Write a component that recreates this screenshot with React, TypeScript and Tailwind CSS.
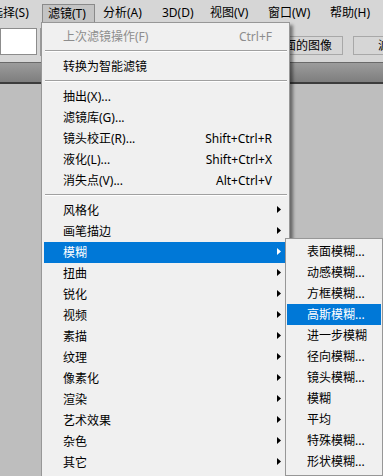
type Row =
  | { kind: "sep" }
  | { kind: "item"; label: string; shortcut?: string; sub?: boolean; disabled?: boolean; active?: boolean };

const mainRows: Row[] = [
  { kind: "item", label: "上次滤镜操作(F)", shortcut: "Ctrl+F", disabled: true },
  { kind: "sep" },
  { kind: "item", label: "转换为智能滤镜" },
  { kind: "sep" },
  { kind: "item", label: "抽出(X)..." },
  { kind: "item", label: "滤镜库(G)..." },
  { kind: "item", label: "镜头校正(R)...", shortcut: "Shift+Ctrl+R" },
  { kind: "item", label: "液化(L)...", shortcut: "Shift+Ctrl+X" },
  { kind: "item", label: "消失点(V)...", shortcut: "Alt+Ctrl+V" },
  { kind: "sep" },
  { kind: "item", label: "风格化", sub: true },
  { kind: "item", label: "画笔描边", sub: true },
  { kind: "item", label: "模糊", sub: true, active: true },
  { kind: "item", label: "扭曲", sub: true },
  { kind: "item", label: "锐化", sub: true },
  { kind: "item", label: "视频", sub: true },
  { kind: "item", label: "素描", sub: true },
  { kind: "item", label: "纹理", sub: true },
  { kind: "item", label: "像素化", sub: true },
  { kind: "item", label: "渲染", sub: true },
  { kind: "item", label: "艺术效果", sub: true },
  { kind: "item", label: "杂色", sub: true },
  { kind: "item", label: "其它", sub: true },
  { kind: "sep" },
];

const blurItems = [
  "表面模糊...",
  "动感模糊...",
  "方框模糊...",
  "高斯模糊...",
  "进一步模糊",
  "径向模糊...",
  "镜头模糊...",
  "模糊",
  "平均",
  "特殊模糊...",
  "形状模糊...",
];

// label + width of each menu bar slot
const menuBar: [string, string][] = [
  ["选择(S)", "w-[56px]"],
  ["滤镜(T)", "w-[56px]"],
  ["分析(A)", "w-[59px]"],
  ["3D(D)", "w-[48px]"],
  ["视图(V)", "w-[58px]"],
  ["窗口(W)", "w-[62px]"],
  ["帮助(H)", "w-[58px]"],
];

function Arrow({ white }: { white?: boolean }) {
  return (
    <svg width="4" height="7" viewBox="0 0 4 7" className="-mt-[3px]">
      <path d="M0 0L4 3.5L0 7Z" fill={white ? "#ffffff" : "#000000"} />
    </svg>
  );
}

export default function App() {
  return (
    <div className="relative w-[383px] h-[476px] overflow-hidden bg-[#bebebe] font-['Noto_Sans','Noto_Sans_CJK_SC',sans-serif] text-[12px] text-black">
      {/* Menu bar */}
      <div className="flex h-[22px] items-start bg-[#d6d6d6] pt-[4px] -ml-[14px]">
        {menuBar.map(([m, w], i) => (
          <div key={m} className={"flex shrink-0 " + w}>
            <div
              className={
                "flex h-[18px] items-center pl-[5px] whitespace-nowrap " +
                (i === 1 ? "w-[53px] border border-b-0 border-[#8a8a8a] bg-[#c4c4c4] pl-[4px]" : "")
              }
            >
              <span className="leading-none">{m}</span>
            </div>
          </div>
        ))}
      </div>

      {/* Options toolbar */}
      <div className="relative flex h-[40px] items-start bg-[#d6d6d6]">
        <div className="mt-[6px] h-[27px] w-[37px] shrink-0 border border-[#8c8c8c] bg-white" />
        <div className="mt-[6px] ml-[3px] h-[28px] w-px shrink-0 bg-[#9a9a9a]" />
        <div className="ml-[229px] mt-[14px] flex h-[19px] w-[73px] shrink-0 items-center justify-end whitespace-nowrap border border-[#a8a8a8] pr-[10px]">
          面的图像
        </div>
        <div className="ml-[10px] mt-[14px] flex h-[19px] w-[50px] shrink-0 items-center whitespace-nowrap border border-[#a8a8a8] pl-[24px]">
          滤除
        </div>
      </div>

      {/* Panel header strip */}
      <div className="h-[22px] border-t border-[#6a6a6a] border-b-2 border-b-[#3c3c3c] bg-gradient-to-b from-[#9c9c9c] to-[#7e7e7e]" />

      {/* Filter dropdown */}
      <div className="absolute left-[41px] top-[22px] h-[470px] w-[249px] border border-[#979797] bg-[#f0f0f0] p-[2px] shadow-[3px_3px_3px_rgba(0,0,0,0.45)]">
        <div className="pt-px">
          {mainRows.map((r, i) =>
            r.kind === "sep" ? (
              <div key={i} className="h-[9px] pt-[3px] pl-[1px]">
                <div className="h-px bg-[#a0a0a0]" />
                <div className="h-px bg-white" />
              </div>
            ) : (
              <div
                key={i}
                className={
                  "flex h-[21px] items-center pl-[19px] " +
                  (r.active ? "bg-[#0078d7] text-white" : r.disabled ? "text-[#8d8d8d]" : "")
                }
              >
                <span className="flex-1 leading-none">{r.label}</span>
                {r.shortcut && <span className="leading-none">{r.shortcut}</span>}
                <span className="flex w-[15px] pl-[5px]">{r.sub && <Arrow white={r.active} />}</span>
              </div>
            )
          )}
        </div>
      </div>

      {/* Blur submenu */}
      <div className="absolute left-[285px] top-[238px] h-[238px] w-[98px] border border-[#979797] bg-[#f0f0f0] px-px py-[2px] shadow-[3px_3px_3px_rgba(0,0,0,0.45)]">
        {blurItems.map((b, i) => (
          <div
            key={b + i}
            className={"flex h-[21px] items-center pl-[20px] " + (i === 3 ? "bg-[#0078d7] text-white" : "")}
          >
            <span className="leading-none whitespace-nowrap">{b}</span>
          </div>
        ))}
      </div>
    </div>
  );
}
